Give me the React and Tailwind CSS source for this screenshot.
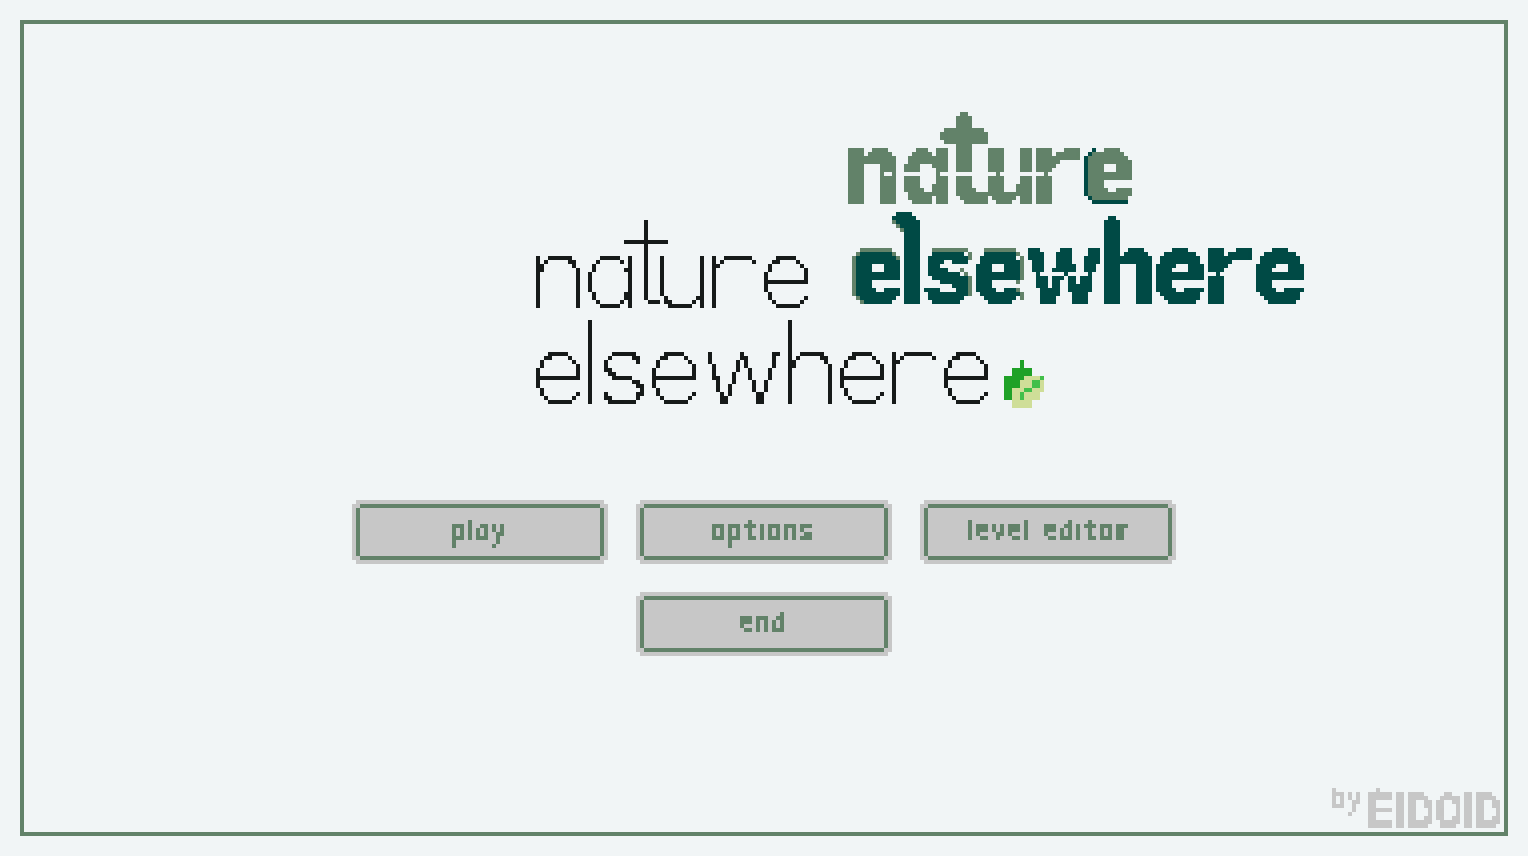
import React from "react";

// Snaps everything drawn through it to a grid of 4px squares.
function PixelFilter({ id, x, y, width, height }) {
  return (
    <filter id={id} filterUnits="userSpaceOnUse" primitiveUnits="userSpaceOnUse" x={x} y={y} width={width} height={height} colorInterpolationFilters="sRGB">
      <feComponentTransfer in="SourceGraphic" result="hard">
        <feFuncA type="discrete" tableValues="0 1" />
      </feComponentTransfer>
      <feFlood x={x + 1} y={y + 1} width="1" height="1" floodColor="#000" result="dot" />
      <feComposite in="dot" in2="dot" operator="over" x={x} y={y} width="4" height="4" result="cell" />
      <feTile in="cell" x={x} y={y} width={width} height={height} result="grid" />
      <feComposite in="hard" in2="grid" operator="in" result="samples" />
      <feMorphology in="samples" operator="dilate" radius="1" result="block" />
      <feOffset in="block" dx="1" dy="0" result="right" />
      <feOffset in="block" dx="0" dy="1" result="down" />
      <feOffset in="block" dx="1" dy="1" result="both" />
      <feMerge>
        <feMergeNode in="block" />
        <feMergeNode in="right" />
        <feMergeNode in="down" />
        <feMergeNode in="both" />
      </feMerge>
    </filter>
  );
}

// glyphs: [character, left edge, ink width, options]
// options: size, weight, lift (px above the baseline), bearing, natural (keep the font's own width)
function Word({ glyphs, y, bearing = 0.1, className }) {
  return (
    <text y={y} className={className}>
      {glyphs.map(([ch, left, width, options = {}], i) => {
        if (ch === " ") return <tspan key={i} x={left}> </tspan>;
        const common = {
          y: y - (options.lift || 0),
          style: { fontSize: options.size, fontWeight: options.weight },
        };
        if (options.natural || "liI".includes(ch)) {
          return (
            <tspan key={i} x={left + width / 2} textAnchor="middle" {...common}>
              {ch}
            </tspan>
          );
        }
        const side = options.bearing === undefined ? bearing : options.bearing;
        const advance = width / (1 - 2 * side);
        return (
          <tspan key={i} x={left - advance * side} textLength={advance} lengthAdjust="spacingAndGlyphs" {...common}>
            {ch}
          </tspan>
        );
      })}
    </text>
  );
}

function Pixels({ rects, className }) {
  return (
    <g className={className} shapeRendering="crispEdges">
      {rects.map(([x, y, w, h], i) => (
        <rect key={i} x={x} y={y} width={w} height={h} />
      ))}
    </g>
  );
}

const thin = "font-['Inter','Lato',sans-serif] text-[95px] font-extralight fill-[#161a19] [font-feature-settings:'cv11']";
const bold = "font-['Inter','Roboto',sans-serif] text-[101px] font-extrabold [font-feature-settings:'cv11']";

const thinR = { natural: true };
const thinW = { bearing: 0.03 };
const boldE = { bearing: 0.06, weight: 900 };
const boldR = { weight: 600, bearing: 0.12 };

function Title() {
  return (
    <svg className="ml-[512px] block h-[308px] w-[768px] shrink-0 overflow-visible" viewBox="536 104 768 308" role="img" aria-label="nature elsewhere">
      <PixelFilter id="title-pixels" x={532} y={100} width={776} height={316} />
      <g filter="url(#title-pixels)">
        <Word className={thin} y={308} glyphs={[["n", 533, 49], ["a", 588, 46], ["t", 626, 44, { size: 122, natural: true, lift: 3 }], ["u", 657, 49], ["r", 704, 32, thinR], ["e", 764, 44]]} />
        <Word className={thin} y={404} glyphs={[["e", 536, 44], ["l", 588, 4, { size: 118 }], ["s", 600, 44], ["e", 652, 44], ["w", 704, 76, thinW], ["h", 785, 49], ["e", 840, 44], ["r", 884, 32, thinR], ["e", 944, 44]]} />
        <Word className={bold + " fill-[#628269]"} y={204} glyphs={[["n", 848, 48], ["a", 906, 42], ["t", 944, 48, { size: 136, weight: 600, natural: true }], ["u", 988, 44], ["r", 1033, 41, boldR], ["e", 1088, 44, boldE]]} />
        <Word className={bold + " fill-[#004a45]"} y={304} glyphs={[["e", 856, 44, boldE], ["l", 904, 16, { size: 112, weight: 600 }], ["s", 925, 44, { bearing: 0.06 }], ["e", 976, 44, boldE], ["w", 1028, 72, { weight: 700, bearing: 0.03 }], ["h", 1104, 48], ["e", 1156, 47, boldE], ["r", 1205, 41, boldR], ["e", 1256, 47, boldE]]} />
      </g>
      <Pixels className="fill-[#161a19]" rects={[[788, 320, 4, 24], [588, 320, 4, 4], [624, 240, 44, 4], [644, 220, 4, 20], [724, 256, 28, 4], [752, 260, 4, 4], [904, 352, 28, 4], [932, 356, 4, 4]]} />
      <Pixels className="fill-[#f1f5f6]" rects={[[884, 172, 8, 4], [904, 172, 32, 4], [940, 172, 8, 4], [956, 172, 16, 4], [988, 172, 8, 4], [1000, 172, 32, 4], [1036, 172, 8, 4], [1048, 172, 4, 4], [1028, 272, 8, 4], [1040, 272, 24, 4], [1068, 272, 20, 4], [1092, 272, 8, 4], [1208, 272, 8, 4], [1220, 272, 4, 4], [956, 112, 4, 4], [968, 112, 4, 4]]} />
      <Pixels className="fill-[#628269]" rects={[[860, 248, 32, 4], [856, 252, 4, 4], [892, 252, 4, 4], [852, 256, 4, 40], [896, 256, 4, 4], [856, 296, 4, 4], [860, 300, 4, 4], [892, 220, 4, 4], [896, 224, 4, 4], [900, 228, 4, 4], [932, 248, 36, 4], [968, 252, 4, 8], [960, 268, 4, 4], [964, 272, 4, 4], [968, 276, 4, 20], [984, 248, 32, 4], [1016, 252, 4, 4], [1020, 256, 4, 24], [1016, 280, 4, 4], [1016, 288, 4, 4], [1020, 292, 4, 8], [960, 112, 8, 4], [944, 128, 40, 4], [940, 132, 4, 8], [1092, 152, 8, 4], [1088, 156, 8, 8], [1088, 188, 8, 8], [1092, 196, 12, 4]]} />
      <Pixels className="fill-[#004a45]" rects={[[1092, 148, 4, 4], [1088, 152, 4, 4], [1084, 156, 4, 40], [1088, 196, 4, 4], [1092, 200, 36, 4], [896, 212, 16, 4], [892, 216, 24, 4], [896, 220, 24, 4], [900, 224, 20, 4], [1108, 216, 8, 4], [1104, 220, 16, 16], [860, 252, 32, 4], [856, 256, 12, 12], [856, 284, 12, 12], [860, 296, 12, 4], [864, 300, 8, 4], [888, 256, 8, 4], [984, 252, 32, 4], [980, 256, 8, 8]]} />
      <Pixels className="fill-[#1fa127]" rects={[[1020, 360, 4, 8], [1012, 368, 20, 8], [1004, 376, 20, 4], [1004, 380, 16, 8], [1004, 388, 8, 12]]} />
      <Pixels className="fill-[#cfde98]" rects={[[1024, 376, 16, 4], [1020, 380, 24, 8], [1012, 388, 32, 4], [1012, 392, 28, 8], [1012, 400, 20, 8]]} />
      <Pixels className="fill-[#42bf4a]" rects={[[1040, 376, 4, 4], [1032, 380, 8, 8], [1024, 388, 8, 4], [1020, 392, 4, 8]]} />
    </svg>
  );
}

const notched = "[clip-path:polygon(4px_0,calc(100%-4px)_0,calc(100%-4px)_4px,100%_4px,100%_calc(100%-4px),calc(100%-4px)_calc(100%-4px),calc(100%-4px)_100%,4px_100%,4px_calc(100%-4px),0_calc(100%-4px),0_4px,4px_4px)]";

function MenuButton({ id, glyphs }) {
  return (
    <button type="button" className={"h-16 w-64 bg-[#c7c7c7] p-1 " + notched}>
      <span className={"block h-14 w-[248px] border-4 border-[#628269] " + notched}>
        <svg className="block h-12 w-60" viewBox="0 0 240 48">
          <PixelFilter id={id} x={0} y={0} width={240} height={48} />
          <g filter={"url(#" + id + ")"}>
            <Word y={32} bearing={0.08} className="fill-[#628269] font-['Inter','Roboto',sans-serif] text-[29px] font-bold [font-feature-settings:'cv11']" glyphs={glyphs} />
          </g>
        </svg>
      </span>
    </button>
  );
}

const smallE = { weight: 800, lift: 0.8 };
const smallI = { size: 22, weight: 800 };
const smallO = { size: 31, weight: 700, lift: 0.4 };

const buttons = [
  { id: "play", glyphs: [["p", 92, 12], ["l", 108, 4], ["a", 116, 12], ["y", 132, 12, { weight: 900, bearing: 0.02 }]] },
  { id: "options", glyphs: [["o", 67, 13, smallO], ["p", 84, 12], ["t", 100, 12], ["i", 116, 4, smallI], ["o", 123, 13, smallO], ["n", 140, 12], ["s", 156, 12]] },
  { id: "level-editor", glyphs: [["l", 40, 4], ["e", 48, 12, smallE], ["v", 64, 12, { weight: 800, bearing: 0.02 }], ["e", 80, 12, smallE], ["l", 96, 4], [" ", 104], ["e", 116, 12, smallE], ["d", 132, 12], ["i", 148, 4, smallI], ["t", 156, 12], ["o", 171, 13, smallO], ["r", 188, 12]] },
  { id: "end", glyphs: [["e", 96, 12, smallE], ["n", 112, 12], ["d", 128, 12]] },
];

function Credit() {
  return (
    <svg className="mr-1 block h-11 w-[168px] overflow-visible fill-[#c7c7c7]" viewBox="1332 788 168 44">
      <PixelFilter id="credit-pixels" x={1328} y={784} width={176} height={48} />
      <g filter="url(#credit-pixels)">
        <Word y={808} bearing={0.08} className="font-['Inter','Roboto',sans-serif] text-[28px] font-semibold" glyphs={[["b", 1332, 12], ["y", 1348, 12, { weight: 900, bearing: 0.02 }]]} />
        <Word y={828} bearing={0.08} className="font-['Inter','Roboto',sans-serif] text-[49.5px] font-extrabold" glyphs={[["E", 1368, 24], ["I", 1396, 8], ["D", 1408, 24], ["O", 1436, 24], ["I", 1464, 8], ["D", 1476, 24]]} />
      </g>
      <Pixels rects={[[1376, 788, 4, 4]]} />
    </svg>
  );
}

export default function App() {
  return (
    <div className="h-[856px] w-[1528px] overflow-hidden bg-[#f1f5f6] p-5">
      <main className="flex h-[816px] w-[1488px] flex-col border-4 border-[#628269] pt-20">
        <Title />
        <nav className="mx-auto mt-[88px] flex w-[824px] flex-wrap justify-center gap-7">
          {buttons.map((b) => (
            <MenuButton key={b.id} id={b.id} glyphs={b.glyphs} />
          ))}
        </nav>
        <footer className="mt-auto flex justify-end">
          <Credit />
        </footer>
      </main>
    </div>
  );
}
